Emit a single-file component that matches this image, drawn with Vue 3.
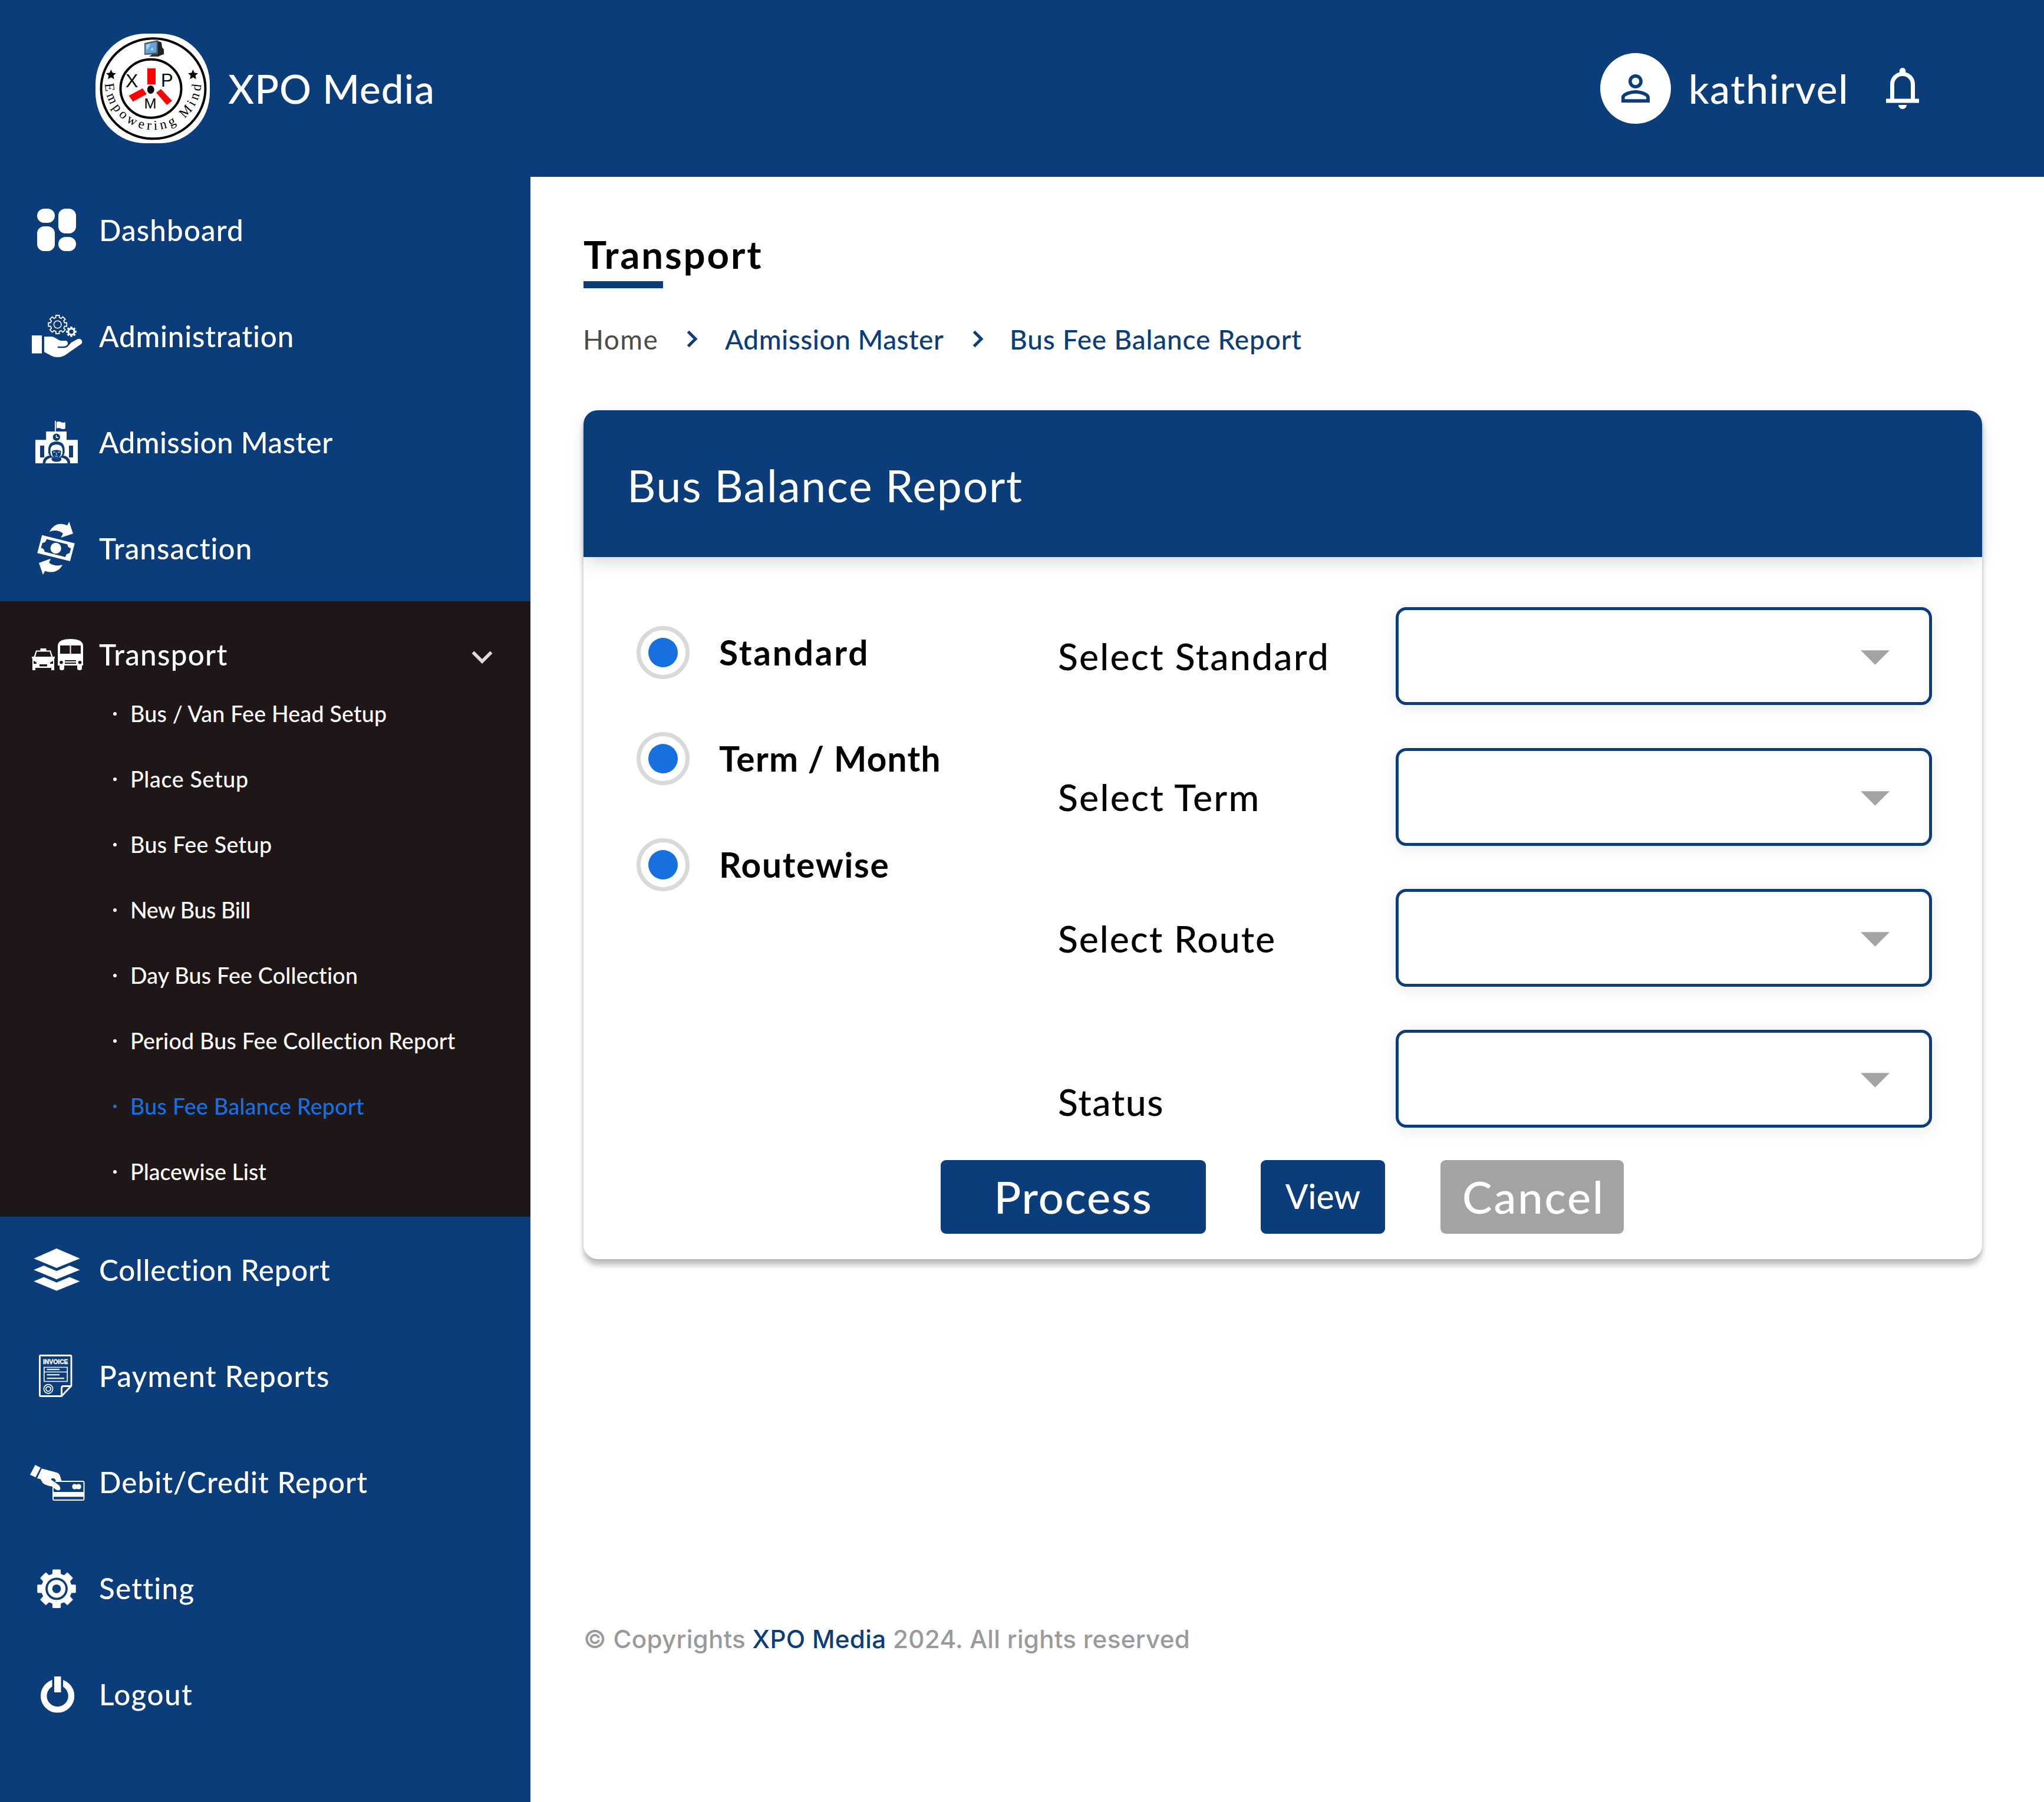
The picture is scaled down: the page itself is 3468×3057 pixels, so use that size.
<script setup>
function gear(cx, cy, ro, ri, teeth, wi, wo) {
  const pts = []
  for (let i = 0; i < teeth; i++) {
    const a = (i * 2 * Math.PI) / teeth - Math.PI / 2
    for (const [r, d] of [[ri, -wi], [ro, -wo], [ro, wo], [ri, wi]]) {
      pts.push((cx + r * Math.cos(a + d)).toFixed(2) + ' ' + (cy + r * Math.sin(a + d)).toFixed(2))
    }
  }
  return 'M' + pts.join('L') + 'Z'
}

const topItems = [
  { icon: 'dashboard', label: 'Dashboard', ls: 0.022 },
  { icon: 'admin', label: 'Administration', ls: 0.0155 },
  { icon: 'admission', label: 'Admission Master', ls: 0.008 },
  { icon: 'transaction', label: 'Transaction', ls: 0.02 },
  { icon: 'transport', label: 'Transport', ls: 0.0254, open: true }
]
const bottomItems = [
  { icon: 'collection', label: 'Collection Report', ls: 0.0155 },
  { icon: 'payment', label: 'Payment Reports', ls: 0.0262 },
  { icon: 'debit', label: 'Debit/Credit Report', ls: 0.0205 },
  { icon: 'setting', label: 'Setting', ls: 0.0247 },
  { icon: 'logout', label: 'Logout', ls: 0.0292 }
]
const items = [...topItems, ...bottomItems]
const submenu = [
  { label: 'Bus / Van Fee Head Setup', ls: 0.0055 },
  { label: 'Place Setup', ls: 0.018 },
  { label: 'Bus Fee Setup', ls: 0.01 },
  { label: 'New Bus Bill', ls: -0.01 },
  { label: 'Day Bus Fee Collection', ls: 0.006 },
  { label: 'Period Bus Fee Collection Report', ls: 0.0054 },
  { label: 'Bus Fee Balance Report', ls: 0.0075, active: true },
  { label: 'Placewise List', ls: 0.0005 }
]
const radios = [
  { label: 'Standard', ls: 0.048 },
  { label: 'Term / Month', ls: 0.0215 },
  { label: 'Routewise', ls: 0.03 }
]
const fields = [
  { label: 'Select Standard', ls: 0.0345 },
  { label: 'Select Term', ls: 0.0355 },
  { label: 'Select Route', ls: 0.0305 },
  { label: 'Status', ls: 0.024, low: true }
]
</script>

<template>
  <div class="app">
    <header class="topbar">
      <svg class="logo" viewBox="0 0 194 186">
        <rect width="194" height="186" rx="84" ry="86" fill="#fff" />
        <g fill="none" stroke="#000" stroke-width="4">
          <ellipse cx="98" cy="93.3" rx="88.5" ry="85" />
          <ellipse cx="94" cy="93.3" rx="51.5" ry="49.5" />
        </g>
        <path fill="#f00" d="M88 59h14v27.3H88zM80 92.7l6.8 10-23.3 12.6-6.9-10zM111 94l-8 6.3L121 121l9-7z" />
        <ellipse cx="93.7" cy="95" rx="6" ry="7" />
        <path d="M26.4 61l2.5 5.6 6 .6-4.5 4.1 1.3 6-5.3-3.1-5.3 3.1 1.3-6-4.5-4.1 6-.6zM165.5 61l2.5 5.6 6 .6-4.5 4.1 1.3 6-5.3-3.1-5.3 3.1 1.3-6-4.5-4.1 6-.6z" />
        <g class="logo-sans">
          <text x="51" y="91" font-size="32">X</text>
          <text x="111" y="90" font-size="31">P</text>
          <text x="82.5" y="126.7" font-size="24" textLength="21" lengthAdjust="spacingAndGlyphs">M</text>
        </g>
        <path fill="#222" d="M105 12l7 3 1 8 3 4v8l-11 4z" />
        <path fill="#555" d="M83 16l23-5v24l-23 1z" />
        <path fill="#5fa6e0" d="M84.500 18l19-4v18l-19 2z" />
        <path fill="#a9d2f5" d="M86 19l8-2-7 12zM95 24l3 1-1 4-3-1z" />
        <path fill="#333" d="M96 35h9l3 4H91z" />
        <path id="mottoArc" fill="none" d="M16 82 A81.500 81 0 0 0 179.500 82" />
        <text class="motto" font-size="23"><textPath href="#mottoArc" startOffset="3" textLength="248">Empowering Mind</textPath></text>
      </svg>
      <span class="brand">XPO Media</span>
      <div class="user">
        <span class="avatar">
          <svg viewBox="0 0 24 24"><path fill="currentColor" d="M12 5.900c1.160 0 2.100.94 2.100 2.100s-.94 2.100-2.100 2.100S9.900 9.160 9.900 8s.94-2.100 2.100-2.100m0 9c2.970 0 6.100 1.460 6.100 2.100v1.100H5.900V17c0-.64 3.130-2.100 6.100-2.100M12 4C9.790 4 8 5.790 8 8s1.790 4 4 4 4-1.790 4-4-1.790-4-4-4zm0 9c-2.670 0-8 1.340-8 4v3h16v-3c0-2.660-5.330-4-8-4z" /></svg>
        </span>
        <span class="username">kathirvel</span>
        <svg class="bell" viewBox="0 0 24 24"><path fill="#fff" d="M4 19v-2h2v-7q0-2.075 1.250-3.687T10.500 4.200v-.7q0-.625.438-1.062T12 2t1.063.438T13.500 3.500v.7q2 .5 3.250 2.113T18 10v7h2v2zm8 3q-.825 0-1.412-.587T10 20h4q0 .825-.587 1.413T12 22m-4-5h8v-7q0-1.650-1.175-2.825T12 6T9.175 7.175T8 10z" /></svg>
      </div>
    </header>

    <div class="body">
      <nav class="sidebar">
        <div v-for="it in items" :key="it.label" :class="{ group: it.open }">
          <div class="item">
            <svg class="icon" viewBox="0 0 168 180" fill="#fff">
              <g v-if="it.icon === 'dashboard'">
                <rect x="63" y="54" width="30" height="24" rx="12" />
                <rect x="63" y="84" width="30" height="42" rx="12" />
                <rect x="99" y="54" width="30" height="42" rx="12" />
                <rect x="99" y="102" width="30" height="24" rx="12" />
              </g>
              <g v-else-if="it.icon === 'admin'">
                <path d="M54 89h17v30.500H54z" />
                <path d="M75 91h12c6 0 12 7 17 7h7c3 0 4.500 2 4 6.500L131 95.500c5-2.500 11 3 7.500 7.500L109 123.500q-12 5-22 0L75 117z" />
                <path d="M99 109h9c7 0 7-4 10.500-7" fill="none" class="cut" stroke-width="2.600" stroke-linecap="round" />
                <path :d="gear(97.7, 70.5, 15.8, 12.2, 8, 0.24, 0.19)" fill="none" stroke="#fff" stroke-width="1.800" stroke-linejoin="round" />
                <circle cx="97.700" cy="70.500" r="6.300" fill="none" stroke="#fff" stroke-width="1.600" />
                <path :d="gear(121, 82.7, 9, 6.6, 8, 0.26, 0.2)" />
                <circle cx="121" cy="82.700" r="3.600" class="hole" />
              </g>
              <g v-else-if="it.icon === 'admission'">
                <path d="M93 54h1.800v19H93zM95.800 56q4-2 7.500 0t7.500 0v11q-3.500 2-7.500 0t-7.500 0z" />
                <path d="M78.200 72H113v14.300h19V126H60V86.300h18.200z" />
                <g class="hole">
                  <circle cx="95.800" cy="81.700" r="6.200" />
                  <path d="M68 96h7v20h-7zM117 96h7v20h-7zM72.500 126q0-11 12-13.500-3-2-2.500-8-.5-15.500 13.800-15.500t13.800 15.500q.5 6-2.500 8 12 2.500 12 13.500z" />
                </g>
                <path d="M95.500 78v4.300h3.500" fill="none" stroke="#fff" stroke-width="1.400" />
                <path d="M76.700 126q1-8 10-9.500h18.200q9 1.500 10 9.500z" />
                <ellipse cx="95.800" cy="119" rx="8.500" ry="4.500" class="hole" />
                <path d="M85.500 104q0-10 10.300-10t10.300 10q.5 8-3.500 10.500-6.800 6-13.600 0-4-2.500-3.500-10.500z" />
                <path d="M88 105q7.800-3.500 15.600 0 .5 12-7.800 12.500-8.300-.5-7.800-12.500z" class="hole" />
                <path d="M90 107h4M98 107h4M95.800 108v4M93.500 114h4.600" fill="none" stroke="#fff" stroke-width="1" />
              </g>
              <g v-else-if="it.icon === 'transaction'">
                <path d="M71.300 67.700l55.500 14-8 30.300-55.500-13.700z" />
                <path d="M79 74.500l35.500 9q0 5.500 6 6.500L118 98.500q-6 0-7 6.500L75.500 96q0-5.500-6-6.500L72 81q6 0 7-6.500z" class="hole" />
                <circle cx="94.700" cy="89.900" r="9.200" />
                <path d="M83.600 62q11-19 30.600-10.700l3.100-6.300 6.700 20.300-20.500 6.700 3.500-7q-10.500-8-23.400-3zM106.200 118.300q-9 17-29.900 10.400L72.900 135 66 115l19.900-7.300-2.700 7q10 7 23 3.600z" />
              </g>
              <g v-else-if="it.icon === 'transport'">
                <path d="M68.500 80h10v3.500H86L89.500 94H93v3h-1v20h-5v-4H60v4h-5V97h-1v-3h3.500L61 83.500h7.500z" />
                <path d="M62.500 85.500h22l2.500 8.500H60zM57 101l5 3v2h-5zM90 101l-5 3v2h5zM67 107h13v3.500H67z" class="dark" />
                <path d="M98 109V76q0-12 21.500-12T141 76v33h-2v5q0 3-4 3t-4-3v-5h-22v5q0 3-4 3t-4-3v-5z" />
                <path d="M102 75h16.500v14H102zM120.500 75H137v14h-16.500zM110 100h19v2h-19zM110 104h19v2h-19z" class="dark" />
                <circle cx="104" cy="103.700" r="2.800" class="dark" /><circle cx="135.500" cy="103.700" r="2.800" class="dark" />
              </g>
              <g v-else-if="it.icon === 'collection'">
                <path d="M96 54l39.600 17L96 87 57.300 71zM74.300 83L96 92.300 118 83l17.600 7.300-39.600 16-38.700-16zM74.300 102.500L96 111.800l22-9.300 17.600 7.300-39.600 16-38.700-16z" />
              </g>
              <g v-else-if="it.icon === 'payment'" fill="none" stroke="#fff">
                <path d="M104.500 124.500H69q-1.500 0-1.500-1.500V57q0-1.500 1.500-1.500h50.500q1.500 0 1.500 1.500v50l-16.500 17.500v-13q0-4 3-4H121" stroke-width="2.800" stroke-linejoin="round" />
                <text class="invoice" x="73" y="70" font-size="11.500" textLength="42.500" lengthAdjust="spacingAndGlyphs" fill="#fff" stroke="#fff" stroke-width="0.400">INVOICE</text>
                <path d="M74.800 75.500h39.400v24H74.800zM74.800 83.500h39.400" stroke-width="1.700" />
                <path d="M79.500 79.300H101M79.500 88.200H101M79.500 94.300H109" stroke-width="1.900" />
                <circle cx="82" cy="112.300" r="7.600" stroke-width="1.700" /><circle cx="82" cy="112.300" r="4" stroke-width="1.800" />
              </g>
              <g v-else-if="it.icon === 'debit'">
                <path d="M59.700 61.300l9.100 4.400-8.400 16.600-9.400-4.600z" />
                <rect x="90" y="89" width="52.500" height="31.800" rx="2" fill="none" stroke="#fff" stroke-width="1.900" />
                <path d="M89 107h54v8.300H89z" />
                <circle cx="126.800" cy="98" r="4.500" /><circle cx="133.300" cy="98" r="4.500" />
                <path d="M70.700 67.300L95 73.700q5 1 6.500 5l3 9.600-12 1.800 8 6q4 7-.500 8-5 1-10.700-6-11-2-15.800-5.400-2-2-4.800-7.400L63 84z" />
                <path d="M87 84.500q6-2.500 8 4l-3 2q-2-3.500-5-3.500z" class="hole" />
              </g>
              <g v-else-if="it.icon === 'setting'">
                <path :d="gear(96, 91.3, 32, 25, 8, 0.24, 0.18)" stroke="#fff" stroke-width="2.500" stroke-linejoin="round" />
                <circle cx="96" cy="91.300" r="17" fill="none" class="cut" stroke-width="3.800" />
                <circle cx="96" cy="91.300" r="7.400" class="hole" />
              </g>
              <g v-else>
                <circle cx="97.600" cy="93" r="23.400" fill="none" stroke="#fff" stroke-width="10.400" />
                <path d="M88.500 60H107v25H88.500z" class="hole" />
                <path d="M92 60h11.500v27H92z" />
              </g>
            </svg>
            <span class="label" :style="{ letterSpacing: it.ls + 'em' }">{{ it.label }}</span>
            <svg v-if="it.open" class="caret" viewBox="0 0 36 24"><path d="M2.500 3.500L18 19 33.500 3.500" fill="none" stroke="#dcdcdc" stroke-width="5.500" /></svg>
          </div>
          <ul v-if="it.open" class="submenu">
            <li v-for="s in submenu" :key="s.label" :class="{ active: s.active }" :style="{ letterSpacing: s.ls + 'em' }">{{ s.label }}</li>
          </ul>
        </div>
      </nav>

      <main class="main">
        <h1>Transport</h1>
        <div class="underline"></div>
        <div class="crumbs">
          <span class="home">Home</span>
          <svg class="chev" viewBox="0 0 19 30"><path d="M2.500 2.500L15 15 2.500 27.500" fill="none" stroke="currentColor" stroke-width="5" /></svg>
          <span class="mid">Admission Master</span>
          <svg class="chev" viewBox="0 0 19 30"><path d="M2.500 2.500L15 15 2.500 27.500" fill="none" stroke="currentColor" stroke-width="5" /></svg>
          <span class="last">Bus Fee Balance Report</span>
        </div>

        <section class="card">
          <div class="card-head">Bus Balance Report</div>
          <div class="card-body">
            <div class="radios">
              <label v-for="r in radios" :key="r.label" class="radio">
                <span class="ring"><span class="dot"></span></span>
                <span class="radio-text" :style="{ letterSpacing: r.ls + 'em' }">{{ r.label }}</span>
              </label>
            </div>
            <div class="fields">
              <div v-for="f in fields" :key="f.label" class="field">
                <span class="field-label" :class="{ low: f.low }" :style="{ letterSpacing: f.ls + 'em' }">{{ f.label }}</span>
                <div class="select"><svg viewBox="0 0 50 25"><path d="M0 0h50L25 25z" fill="#a3a3a3" /></svg></div>
              </div>
            </div>
          </div>
          <div class="actions">
            <button class="btn process">Process</button>
            <button class="btn view">View</button>
            <button class="btn cancel">Cancel</button>
          </div>
        </section>

        <footer class="footer">© Copyrights <b>XPO Media</b> 2024. All rights reserved</footer>
      </main>
    </div>
  </div>
</template>

<style>
body { margin: 0; background: #fff; }
</style>

<style scoped>
.app {
  --blue: #0b3d7b;
  width: 3468px;
  height: 3057px;
  overflow: hidden;
  font-family: Lato, "Open Sans", sans-serif;
  font-weight: 500;
  color: #000;
  display: flex;
  flex-direction: column;
}
.topbar {
  height: 300px;
  flex: none;
  background: var(--blue);
  color: #fff;
  display: flex;
  align-items: center;
  padding: 0 198px 0 162px;
  box-sizing: border-box;
  font-size: 67.5px;
}
.logo { width: 194px; height: 186px; flex: none; }
.logo-sans { font-family: "Liberation Sans", sans-serif; font-weight: 400; }
.motto { font-family: "Liberation Serif", serif; font-weight: 400; }
.brand { margin-left: 31px; padding-bottom: 2px; letter-spacing: 0.0147em; }
.user { margin-left: auto; display: flex; align-items: center; }
.avatar {
  width: 120px;
  height: 120px;
  border-radius: 50%;
  background: #fff;
  color: var(--blue);
  display: flex;
  align-items: center;
  justify-content: center;
}
.avatar svg { width: 72px; height: 72px; }
.username { width: 321px; margin-left: 30px; padding-bottom: 2px; letter-spacing: 0.024em; }
.bell { width: 84px; height: 84px; }
.body { display: flex; flex: 1; }
.sidebar { width: 900px; flex: none; background: var(--blue); color: #fff; }
.group { height: 1044px; background: #1f1617; }
.item { height: 180px; display: flex; align-items: center; }
.icon { width: 168px; height: 180px; flex: none; }
.hole { fill: var(--blue); }
.cut { stroke: var(--blue); }
.dark { fill: #1f1617; }
.invoice { font-family: "Liberation Sans", sans-serif; font-weight: 700; }
.label { font-size: 49.4px; }
.caret { width: 36px; height: 24px; margin: 10px 64px 0 auto; }
.submenu { list-style: none; margin: -45px 0 0; padding: 0; }
.submenu li {
  height: 111px;
  line-height: 111px;
  font-size: 37.6px;
  padding-left: 192px;
  display: flex;
  align-items: center;
  white-space: nowrap;
}
.submenu li::before {
  content: "";
  width: 6px;
  height: 6px;
  border-radius: 50%;
  background: currentColor;
  margin-right: 23px;
}
.submenu .active { color: #1670e0; }
.main { padding: 90px 0 0 90px; width: 2373px; display: flex; flex-direction: column; }
h1 { margin: 0; font-size: 65.4px; line-height: 82px; height: 80px; font-weight: 700; letter-spacing: 0.0435em; }
.underline { width: 135px; height: 12px; margin-top: 7px; background: var(--blue); }
.crumbs {
  margin-top: 56px;
  height: 60px;
  font-size: 45.9px;
  color: var(--blue);
  display: flex;
  align-items: center;
  white-space: nowrap;
}
.home { width: 176px; margin-left: -1px; color: #4b4b4b; font-weight: 400; letter-spacing: 0.032em; }
.mid { width: 420px; margin-left: 46px; letter-spacing: 0.0117em; }
.last { margin-left: 44px; letter-spacing: 0.0185em; }
.chev { width: 19px; height: 30px; }
.card {
  margin-top: 91px;
  height: 1440px;
  border-radius: 24px;
  background: #fff;
  box-shadow: 0 10px 10px rgba(0, 0, 0, 0.25), 0 0 6px rgba(0, 0, 0, 0.08);
}
.card-head {
  height: 249px;
  line-height: 254px;
  padding-left: 74px;
  border-radius: 24px 24px 0 0;
  background: var(--blue);
  color: #fff;
  font-size: 75.1px;
  font-weight: 400;
  letter-spacing: 0.0228em;
  box-shadow: 0 12px 30px -6px rgba(0, 0, 0, 0.18);
}
.card-body { display: flex; padding-left: 90px; }
.radios { width: 715px; margin-top: 72px; }
.radio { height: 180px; display: flex; align-items: center; }
.ring {
  width: 90px;
  height: 90px;
  box-sizing: border-box;
  border: 7px solid #d9d9d9;
  border-radius: 50%;
  display: flex;
  align-items: center;
  justify-content: center;
}
.dot { width: 50px; height: 50px; border-radius: 50%; background: #1670e0; }
.radio-text { font-size: 58.6px; font-weight: 700; margin-left: 50px; padding-bottom: 3px; }
.fields { margin-top: 84.5px; display: flex; flex-direction: column; gap: 73.3px; }
.field { display: flex; height: 166px; align-items: center; }
.field-label { width: 573px; font-size: 62.6px; }
.low { padding-top: 76px; }
.select {
  width: 910px;
  height: 166px;
  box-sizing: border-box;
  border: 5px solid var(--blue);
  border-radius: 18px;
  background: #fff;
  box-shadow: 0 4px 28px rgba(0, 0, 0, 0.09);
  display: flex;
  align-items: center;
  justify-content: flex-end;
  padding-right: 67px;
}
.select svg { width: 49px; height: 25px; margin-top: 5px; }
.actions { display: flex; margin: 54.6px 0 0 606px; }
.btn {
  height: 125px;
  border: 0;
  border-radius: 9px;
  background: var(--blue);
  color: #fff;
  font-family: inherit;
  font-weight: 500;
  font-size: 75.8px;
  padding: 0 0 2px;
}
.process { width: 450px; letter-spacing: 0.024em; }
.view { width: 211px; margin-left: 93px; font-size: 57px; padding-bottom: 3px; }
.cancel { width: 311px; margin-left: 94px; background: #a3a3a3; letter-spacing: 0.038em; padding-left: 5px; }
.footer {
  margin-top: 615px;
  font-family: Inter, sans-serif;
  font-size: 42.2px;
  line-height: 60px;
  letter-spacing: 0.007em;
  color: #9a9a9a;
}
.footer b { font-weight: 500; color: var(--blue); }
</style>
